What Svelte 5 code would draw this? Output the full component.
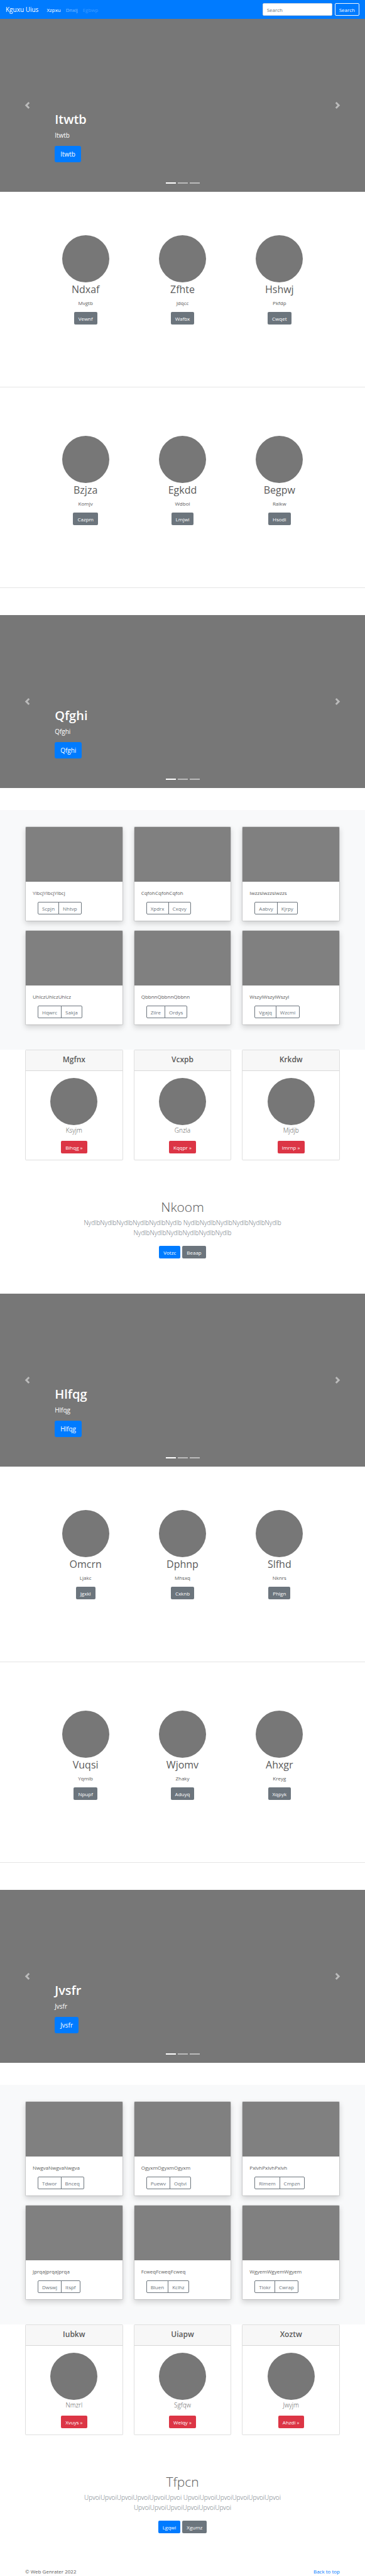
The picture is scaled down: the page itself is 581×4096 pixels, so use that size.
<script>
  const groups = [
    {
      hero: 'Itwtb',
      features: [
        [['Ndxaf', 'Mvgtb', 'Vewnf'], ['Zfhte', 'Jdqcc', 'Wafbx'], ['Hshwj', 'Pkfdp', 'Cwqet']],
        [['Bzjza', 'Komjv', 'Cazpm'], ['Egkdd', 'Wdbol', 'Lmjwi'], ['Begpw', 'Ralkw', 'Hsodi']]
      ],
      second: 'Qfghi',
      album: [
        ['YlbcjYlbcjYlbcj', 'Scpjn', 'Nhtvp'],
        ['CqfohCqfohCqfoh', 'Xpdrx', 'Cxqvy'],
        ['IwzzsIwzzsIwzzs', 'Aabvy', 'Kjrpy'],
        ['UhlczUhlczUhlcz', 'Hqwrc', 'Sakja'],
        ['QbbnnQbbnnQbbnn', 'Zilre', 'Ordys'],
        ['WszylWszylWszyl', 'Vgajq', 'Wzcmi']
      ],
      pricing: [['Mgfnx', 'Ksyjm', 'Bihqg'], ['Vcxpb', 'Gnzla', 'Kqqpr'], ['Krkdw', 'Mjdjb', 'Imrnp']],
      intro: { title: 'Nkoom', word: 'Nydlb', primary: 'Votzc', secondary: 'Beaap' }
    },
    {
      hero: 'Hlfqg',
      features: [
        [['Omcrn', 'Ljakc', 'Jgxkl'], ['Dphnp', 'Mhsxq', 'Cxknb'], ['Slfhd', 'Nknrs', 'Phlgn']],
        [['Vuqsi', 'Yqmib', 'Npupf'], ['Wjomv', 'Zhaky', 'Aduyq'], ['Ahxgr', 'Kreyg', 'Xqpyk']]
      ],
      second: 'Jvsfr',
      album: [
        ['NwgvaNwgvaNwgva', 'Tdwor', 'Bnceq'],
        ['OgyxmOgyxmOgyxm', 'Puewv', 'Oqtvi'],
        ['PxlvhPxlvhPxlvh', 'Rlmem', 'Cmpzn'],
        ['JprqaJprqaJprqa', 'Dwswj', 'Itspf'],
        ['FcweqFcweqFcweq', 'Bluen', 'Kclhz'],
        ['WgyemWgyemWgyem', 'Tlokr', 'Cwrap']
      ],
      pricing: [['Iubkw', 'Nmzrl', 'Xvuys'], ['Uiapw', 'Sgfqw', 'Welqy'], ['Xoztw', 'Jwyjm', 'Ahzdi']],
      intro: { title: 'Tfpcn', word: 'Upvoi', primary: 'Lgqwi', secondary: 'Xgumz' }
    }
  ];

  const lead = (word) => Array(3).fill(word.repeat(6)).join(' ');
</script>

{#snippet carousel(text)}
  <section class="carousel">
    <div class="caption">
      <h1>{text}</h1>
      <p>{text}</p>
      <a class="btn btn-lg primary" href="#top">{text}</a>
    </div>
    <button class="arrow prev" aria-label="Previous">
      <svg viewBox="0 0 8 8" aria-hidden="true"><path d="M5.25 0l-4 4 4 4 1.5-1.5L4.25 4l2.5-2.5L5.25 0z" /></svg>
    </button>
    <button class="arrow next" aria-label="Next">
      <svg viewBox="0 0 8 8" aria-hidden="true"><path d="M2.75 0l-1.5 1.5L3.75 4l-2.5 2.5L2.75 8l4-4-4-4z" /></svg>
    </button>
    <div class="indicators">
      <span class="active"></span><span></span><span></span>
    </div>
  </section>
{/snippet}

<div class="page" id="top">
  <nav>
    <a class="brand" href="#top">Kguxu Uius</a>
    <div class="links">
      <a class="current" href="#top">Xzpxu</a>
      <a href="#top">Dnxij</a>
      <a class="disabled" href="#top" aria-disabled="true">Egbwp</a>
    </div>
    <form onsubmit={(e) => e.preventDefault()}>
      <input type="search" placeholder="Search" aria-label="Search" />
      <button class="btn outline-light" type="submit">Search</button>
    </form>
  </nav>

  <main>
    {#each groups as group}
      <div class="group">
        {@render carousel(group.hero)}
        <div class="marketing">
          {#each group.features as row}
            <div class="features">
              {#each row as [title, text, action]}
                <div class="feature">
                  <div class="circle"></div>
                  <h2>{title}</h2>
                  <p>{text}</p>
                  <a class="btn secondary" href="#top">{action}</a>
                </div>
              {/each}
            </div>
            <hr />
          {/each}
        </div>
        {@render carousel(group.second)}
        <section class="album">
          <div class="columns">
            {#each group.album as [text, left, right]}
              <article class="card shadow">
                <div class="thumb"></div>
                <div class="card-body">
                  <p>{text}</p>
                  <div class="btn-group">
                    <button class="btn outline">{left}</button>
                    <button class="btn outline">{right}</button>
                  </div>
                </div>
              </article>
            {/each}
          </div>
        </section>
        <section class="columns">
          {#each group.pricing as [title, text, action]}
            <article class="card plan">
              <h3>{title}</h3>
              <div class="plan-body">
                <div class="circle"></div>
                <p>{text}</p>
                <a class="btn danger" href="#top">{action} »</a>
              </div>
            </article>
          {/each}
        </section>
        <section class="intro">
          <h2>{group.intro.title}</h2>
          <p>{lead(group.intro.word)}</p>
          <div class="actions">
            <a class="btn primary" href="#top">{group.intro.primary}</a>
            <a class="btn secondary" href="#top">{group.intro.secondary}</a>
          </div>
        </section>
      </div>
    {/each}
  </main>

  <footer>
    <span>© Web Genrater 2022</span>
    <a href="#top">Back to top</a>
  </footer>
</div>

<style>
  :global(body) {
    margin: 0;
    background: #fff;
  }

  .page,
  .page * {
    box-sizing: border-box;
  }

  .page {
    font-family: 'Open Sans', 'Noto Sans', sans-serif;
    font-size: 8px;
    line-height: 13px;
    color: #5a5a5a;
  }

  h1,
  h2,
  h3,
  p {
    margin: 0;
  }

  a {
    text-decoration: none;
    color: #007bff;
  }

  button,
  input {
    font: inherit;
  }

  .btn {
    display: inline-flex;
    align-items: center;
    justify-content: center;
    height: 20px;
    padding: 0 6px;
    border: 1px solid transparent;
    border-radius: 2px;
    color: #fff;
    background: transparent;
    white-space: nowrap;
    cursor: pointer;
  }

  .btn-lg {
    height: 26px;
    padding: 0 8px;
    font-size: 10px;
    border-radius: 3px;
  }

  .primary {
    background: #007bff;
  }

  .secondary {
    background: #6c757d;
  }

  .danger {
    background: #dc3545;
  }

  .outline-light {
    border-color: #f8f9fa;
  }

  .outline {
    border-color: #6c757d;
    color: #6c757d;
  }

  nav {
    display: flex;
    align-items: center;
    height: 30px;
    padding: 0 9px;
    background: #007bff;
  }

  .brand {
    margin-right: 13px;
    font-size: 10px;
    color: #fff;
  }

  .links {
    display: flex;
    gap: 8px;
    flex: 1;
  }

  .links a {
    color: rgba(255, 255, 255, 0.5);
  }

  .links .current {
    color: #fff;
  }

  .links .disabled {
    color: rgba(255, 255, 255, 0.25);
  }

  form {
    display: flex;
    gap: 4px;
  }

  input {
    width: 111px;
    height: 20px;
    padding: 0 6px;
    border: 1px solid #ced4da;
    border-radius: 2px;
    background: #fff;
    color: #495057;
    appearance: none;
  }

  input::placeholder {
    color: #6c757d;
    opacity: 1;
  }

  .carousel {
    position: relative;
    display: flex;
    align-items: flex-end;
    min-height: 275px;
    padding: 0 15% 47px;
    background: #777;
    color: #fff;
  }

  .caption {
    display: flex;
    flex-direction: column;
    align-items: flex-start;
  }

  .caption h1 {
    margin-bottom: 4px;
    font-size: 20px;
    line-height: 26px;
    font-weight: 600;
  }

  .caption p {
    margin-bottom: 9px;
    font-size: 10px;
    line-height: 16px;
  }

  .arrow {
    position: absolute;
    top: 0;
    bottom: 0;
    display: flex;
    align-items: center;
    justify-content: center;
    width: 15%;
    padding: 0;
    border: 0;
    background: transparent;
    opacity: 0.5;
  }

  .arrow svg {
    width: 11px;
    height: 11px;
    fill: #fff;
  }

  .prev {
    left: 0;
  }

  .next {
    right: 0;
  }

  .indicators {
    position: absolute;
    left: 0;
    right: 0;
    bottom: 13px;
    display: flex;
    justify-content: center;
    gap: 3px;
  }

  .indicators span {
    width: 16px;
    height: 2px;
    background: #fff;
    opacity: 0.5;
  }

  .indicators .active {
    opacity: 1;
  }

  .marketing {
    padding: 69px 0 43px;
  }

  .features {
    display: grid;
    grid-template-columns: repeat(3, 1fr);
    padding: 0 59px 99px;
  }

  .feature,
  .plan-body {
    display: flex;
    flex-direction: column;
    align-items: center;
  }

  .circle {
    width: 75px;
    height: 75px;
    border-radius: 50%;
    background: #777;
  }

  .feature h2 {
    margin-bottom: 4px;
    font-size: 16px;
    line-height: 22px;
    font-weight: 400;
  }

  .feature p {
    margin-bottom: 8px;
  }

  hr {
    height: 1px;
    margin: 0;
    border: 0;
    background: #e5e5e5;
  }

  hr + .features {
    padding-top: 77px;
  }

  .album {
    margin-top: 35px;
    padding: 26px 0 39px;
    background: #f8f9fa;
  }

  .columns {
    display: grid;
    grid-template-columns: repeat(3, 1fr);
    gap: 14px 17px;
    padding: 0 40px;
  }

  .card {
    overflow: hidden;
    border: 1px solid rgba(0, 0, 0, 0.125);
    border-radius: 2px;
    background: #fff;
    background-clip: padding-box;
  }

  .shadow {
    box-shadow: 0 4px 9px rgba(0, 0, 0, 0.15);
  }

  .thumb {
    height: 87px;
    background: #808080;
  }

  .card-body {
    padding: 11px 11px 10px;
  }

  .card-body p {
    margin-bottom: 8px;
  }

  .btn-group {
    display: flex;
    padding-left: 8px;
  }

  .btn-group .btn:first-child {
    border-radius: 2px 0 0 2px;
  }

  .btn-group .btn:last-child {
    margin-left: -1px;
    border-radius: 0 2px 2px 0;
  }

  .plan h3 {
    padding: 7px 11px 9px;
    border-bottom: 1px solid rgba(0, 0, 0, 0.125);
    background: #f7f7f7;
    font-size: 12px;
    line-height: 16px;
    font-weight: 600;
    text-align: center;
  }

  .plan-body {
    padding: 11px 11px 10px;
  }

  .plan-body p {
    margin-bottom: 9px;
    font-size: 10px;
    line-height: 16px;
    font-weight: 300;
  }

  .intro {
    max-width: 344px;
    margin: 0 auto;
    padding: 61px 0 40px;
    text-align: center;
  }

  .intro h2 {
    margin-bottom: 4px;
    font-size: 21px;
    line-height: 26px;
    font-weight: 300;
  }

  .intro p {
    margin-bottom: 13px;
    font-size: 10px;
    line-height: 16px;
    font-weight: 300;
    color: #6c757d;
  }

  .actions {
    display: flex;
    justify-content: center;
    gap: 3px;
  }

  .group + .group {
    margin-top: 16px;
  }

  footer {
    display: flex;
    justify-content: space-between;
    margin-top: 14px;
    padding: 0 40px;
  }
</style>
